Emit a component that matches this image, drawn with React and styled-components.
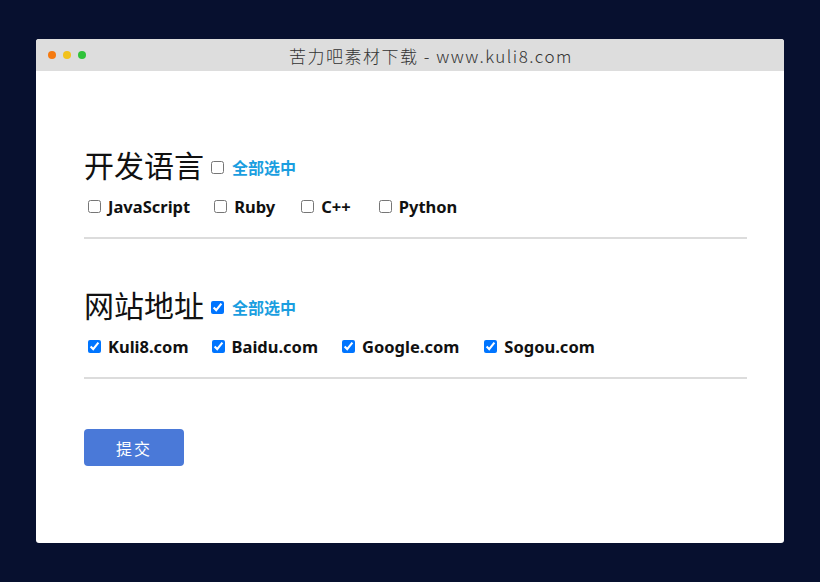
import React, { useState } from 'react';
import styled, { createGlobalStyle } from 'styled-components';

const GlobalStyle = createGlobalStyle`
  html, body {
    margin: 0;
    padding: 0;
    background: #07102f;
  }
  body {
    font-family: "Noto Sans CJK SC", "Noto Sans", sans-serif;
  }
`;

const Page = styled.div`
  width: 820px;
  height: 582px;
  padding: 39px 36px 0 36px;
  box-sizing: border-box;
`;

const Window = styled.div`
  width: 748px;
  height: 504px;
  background: #fff;
  border-radius: 3px;
  overflow: hidden;
  display: flex;
  flex-direction: column;
`;

const TitleBar = styled.div`
  height: 32px;
  background: #dddddd;
  display: flex;
  align-items: center;
  position: relative;
  padding-left: 12px;
`;

const Dots = styled.div`
  display: flex;
  gap: 7px;
`;

const Dot = styled.span`
  width: 8px;
  height: 8px;
  border-radius: 50%;
  background: ${p => p.color};
`;

const Title = styled.div`
  position: absolute;
  left: 0;
  right: 0;
  padding-left: 42px;
  text-align: center;
  font-size: 17px;
  font-weight: 300;
  color: #333;
  letter-spacing: 1.5px;
`;

const Content = styled.div`
  padding: 73px 37px 0 48px;
`;

const Section = styled.div`
  border-bottom: 2px solid #dcdcdc;
  padding-bottom: 18px;
  margin-bottom: 45px;
`;

const Head = styled.div`
  display: flex;
  align-items: center;
  height: 40px;
`;

const HeadTitle = styled.h2`
  margin: 0;
  font-size: 30px;
  font-weight: 400;
  color: #111;
  line-height: 40px;
`;

const SelectAll = styled.label`
  display: flex;
  align-items: center;
  margin-left: 7px;
  margin-top: 6px;
  font-size: 16px;
  font-weight: 700;
  color: #1a9ee0;
  cursor: pointer;

  input {
    margin: 0 8px 0 0;
    width: 13px;
    height: 13px;
  }
`;

const Options = styled.div`
  display: flex;
  align-items: center;
  margin-top: 10px;
  padding-left: 4px;
  height: 25px;
`;

const Option = styled.label`
  display: flex;
  align-items: center;
  margin-right: ${p => p.$gap}px;
  font-family: "Noto Sans", "Noto Sans CJK SC", sans-serif;
  font-size: 16.5px;
  font-weight: 700;
  color: #111;
  cursor: pointer;

  input {
    margin: 0 7px 0 0;
    width: 13px;
    height: 13px;
  }
`;

const Submit = styled.button`
  width: 100px;
  height: 37px;
  background: #4a79d8;
  border: none;
  border-radius: 4px;
  color: #fff;
  font-family: "Noto Sans CJK SC", sans-serif;
  font-size: 16px;
  letter-spacing: 2px;
  margin-top: 5px;
  cursor: pointer;
`;

const groups = [
  { title: '开发语言', items: ['JavaScript', 'Ruby', 'C++', 'Python'], gaps: [24, 26, 28, 24], init: false },
  { title: '网站地址', items: ['Kuli8.com', 'Baidu.com', 'Google.com', 'Sogou.com'], gaps: [23, 24, 25, 22], init: true },
];

function Group({ title, items, gaps, init }) {
  const [checked, setChecked] = useState(items.map(() => init));
  const all = checked.every(Boolean);

  const toggleAll = () => setChecked(items.map(() => !all));
  const toggle = i => setChecked(checked.map((c, j) => (j === i ? !c : c)));

  return (
    <Section>
      <Head>
        <HeadTitle>{title}</HeadTitle>
        <SelectAll>
          <input type="checkbox" checked={all} onChange={toggleAll} />
          全部选中
        </SelectAll>
      </Head>
      <Options>
        {items.map((item, i) => (
          <Option key={item} $gap={gaps[i]}>
            <input type="checkbox" checked={checked[i]} onChange={() => toggle(i)} />
            {item}
          </Option>
        ))}
      </Options>
    </Section>
  );
}

export default function App() {
  return (
    <Page>
      <GlobalStyle />
      <Window>
        <TitleBar>
          <Dots>
            <Dot color="#f57a10" />
            <Dot color="#f2c21c" />
            <Dot color="#2fc23a" />
          </Dots>
          <Title>苦力吧素材下载 - www.kuli8.com</Title>
        </TitleBar>
        <Content>
          {groups.map(g => (
            <Group key={g.title} {...g} />
          ))}
          <Submit>提交</Submit>
        </Content>
      </Window>
    </Page>
  );
}
